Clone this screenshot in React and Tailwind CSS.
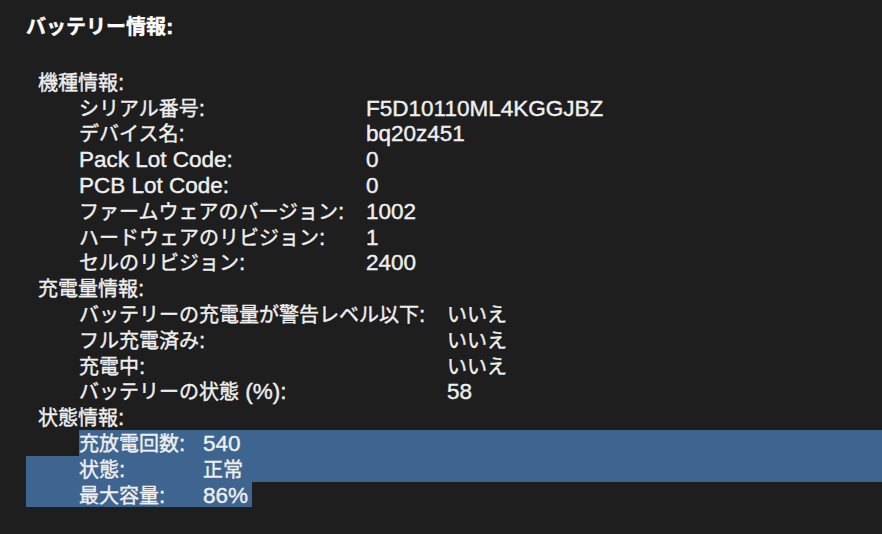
import React from 'react';

const groups = [
  {
    title: '機種情報:',
    labelW: 'w-[287px]',
    rows: [
      ['シリアル番号:', 'F5D10110ML4KGGJBZ'],
      ['デバイス名:', 'bq20z451'],
      ['Pack Lot Code:', '0'],
      ['PCB Lot Code:', '0'],
      ['ファームウェアのバージョン:', '1002'],
      ['ハードウェアのリビジョン:', '1'],
      ['セルのリビジョン:', '2400'],
    ],
  },
  {
    title: '充電量情報:',
    labelW: 'w-[368px]',
    rows: [
      ['バッテリーの充電量が警告レベル以下:', 'いいえ'],
      ['フル充電済み:', 'いいえ'],
      ['充電中:', 'いいえ'],
      ['バッテリーの状態 (%):', '58'],
    ],
  },
];

const selected = [
  ['充放電回数:', '540'],
  ['状態:', '正常'],
  ['最大容量:', '86%'],
];

// latin runs get their own font so they sit wider, like the system font does
const Txt = ({ children }) => (
  <>
    {children.split(/([\x20-\x7e]+)/).map((part, i) =>
      /^[\x20-\x7e]+$/.test(part) ? (
        <span key={i} className="font-['Liberation_Sans',sans-serif] text-[22.5px]">
          {part}
        </span>
      ) : (
        part && <span key={i}>{part}</span>
      )
    )}
  </>
);

const Row = ({ label, value, labelW }) => (
  <div className="flex h-[25.8px] items-baseline whitespace-nowrap">
    <div className={`${labelW} shrink-0`}>
      <Txt>{label}</Txt>
    </div>
    <div>
      <Txt>{value}</Txt>
    </div>
  </div>
);

export default function App() {
  return (
    <div className="w-[882px] h-[534px] overflow-hidden bg-[#1e1e1e] text-[#efefef] font-['Noto_Sans_CJK_JP',sans-serif] text-[20px] leading-[25.8px] [-webkit-text-stroke:0.4px_currentColor]">
      <div className="pt-[13px] pl-[26px]">
        <div className="h-[25.8px] font-bold text-white">
          <Txt>バッテリー情報:</Txt>
        </div>

        <div className="mt-[30px]">
          {groups.map((g) => (
            <div key={g.title}>
              <div className="h-[25.8px] pl-[12px]">
                <Txt>{g.title}</Txt>
              </div>
              <div className="pl-[53px]">
                {g.rows.map(([l, v]) => (
                  <Row key={l} label={l} value={v} labelW={g.labelW} />
                ))}
              </div>
            </div>
          ))}

          <div className="h-[25.8px] pl-[12px]">
            <Txt>状態情報:</Txt>
          </div>

          {/* text selection */}
          <div className="ml-[53px] bg-[#3e6590]">
            <Row label={selected[0][0]} value={selected[0][1]} labelW="w-[124px]" />
          </div>
          <div className="pl-[53px] bg-[#3e6590]">
            <Row label={selected[1][0]} value={selected[1][1]} labelW="w-[124px]" />
          </div>
          <div className="w-[226px] pl-[53px] bg-[#3e6590]">
            <Row label={selected[2][0]} value={selected[2][1]} labelW="w-[124px]" />
          </div>
        </div>
      </div>
    </div>
  );
}
